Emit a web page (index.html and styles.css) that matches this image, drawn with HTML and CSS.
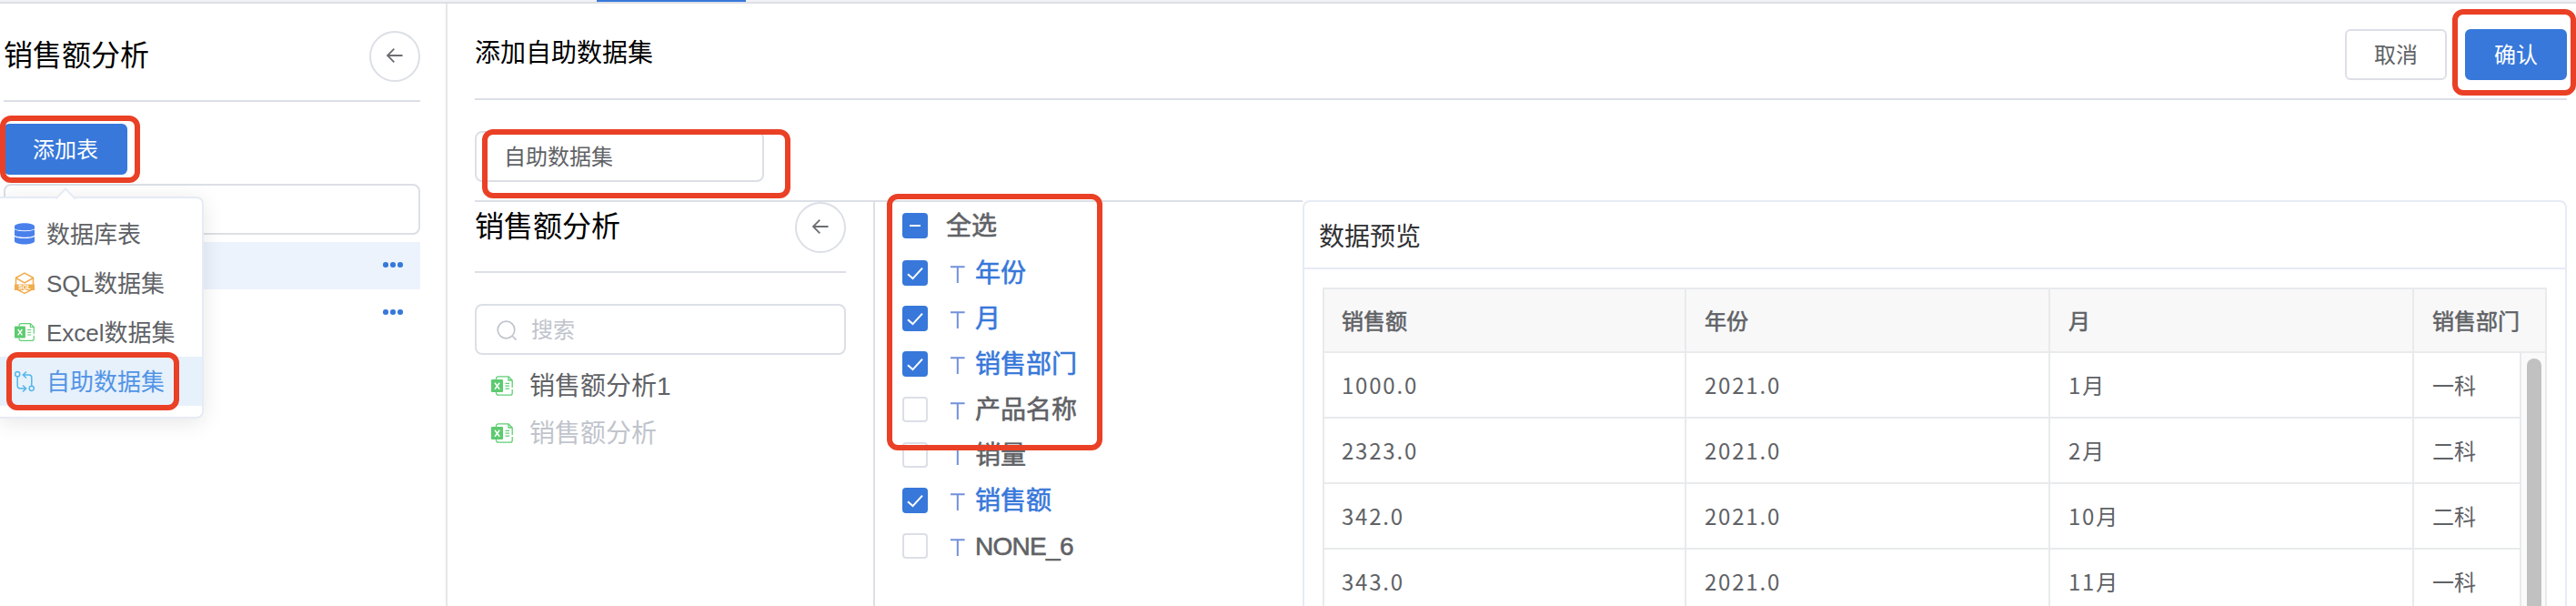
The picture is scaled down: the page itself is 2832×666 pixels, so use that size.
FILE: index.html
```html
<!DOCTYPE html>
<html lang="zh-CN">
<head>
<meta charset="utf-8">
<title>添加自助数据集</title>
<link rel="stylesheet" href="styles.css">
</head>
<body>
<svg class="defs" width="0" height="0">
  <symbol id="i-back" viewBox="0 0 20 18"><path d="M18.500 9H1.800M9.300 1.700L2 9l7.300 7.300" fill="none" stroke="currentColor" stroke-width="1.800"/></symbol>
  <symbol id="i-excel" viewBox="0 0 24 22"><path d="M5.500 4V3a2.200 2.200 0 0 1 2.200-2.200H19l4.200 4.200V13M23.200 15v4a2.200 2.200 0 0 1-2.200 2.200H7.700a2.200 2.200 0 0 1-2.200-2.200V18M19 1v4h4" fill="none" stroke="#5fcf74" stroke-width="1.300"/><rect x="0" y="4" width="13" height="14" rx="1" fill="#5ccb6f"/><path d="M4 7.700l5.200 7M9.200 7.700l-5.200 7" stroke="#fff" stroke-width="1.500"/><path d="M15.500 8.300h4.500M15.500 11.200h4.500M15.500 14.200h4.500" stroke="#5fcf74" stroke-width="1.200"/></symbol>
  <symbol id="i-t" viewBox="0 0 16 19"><path d="M0 1.200h15.600M7.800 1.200V19" fill="none" stroke="#7191da" stroke-width="2"/></symbol>
  <symbol id="i-check" viewBox="0 0 28 28"><path d="M6 15.200l5.500 4.900L22 8.600" fill="none" stroke="#fff" stroke-width="2"/></symbol>
</svg>
<div class="topbar"><div class="tab"></div></div>
<div class="app">
  <aside class="sidebar">
    <div class="group-head"><h2>销售额分析</h2><span class="circle"><svg><use href="#i-back"/></svg></span></div>
    <div class="add-row"><button class="btn primary add">添加表</button><i class="mark m-add"></i></div>
    <div class="input side-input">
      <div class="menu">
        <svg class="menu-arrow" viewBox="0 0 22 13"><path d="M0 13L11 1.500 22 13" fill="#fff" stroke="#e6ebf5" stroke-width="2"/></svg>
        <div class="menu-item"><svg viewBox="0 0 22 24"><path d="M0 4c0-5 22-5 22 0v2c0 3-22 3-22 0zM0 7.300c4 2.500 18 2.500 22 0v6.200c-2 3-20 3-22 0zM0 15c4 2.700 18 2.700 22 0v5c0 4.600-22 4.600-22 0z" fill="#4a80ec"/></svg>数据库表</div>
        <div class="menu-item"><svg viewBox="0 0 22 24"><path d="M1.500 14V6.300L11 1l9.500 5.300V14M1.500 6.500L11 12l9.500-5.500M3.500 19.500L11 23.300l7.500-3.800" fill="none" stroke="#f0ad4e" stroke-width="1.500"/><path d="M0 13.500h22v6.500H0z" fill="#f0ad4e"/><text x="11" y="19.300" text-anchor="middle" class="sql">SQL</text></svg>SQL数据集</div>
        <div class="menu-item"><svg><use href="#i-excel"/></svg>Excel数据集</div>
        <div class="menu-item active"><svg viewBox="0 0 22 24" fill="none" stroke="#54b5ea" stroke-width="1.500"><circle cx="3.200" cy="4.200" r="2.600"/><circle cx="18.800" cy="19.800" r="2.600"/><path d="M3.200 6.800V17a3 3 0 0 0 3 3h6.300M9 16.500l3.700 3.500L9 23.500M18.800 17.200V8a3 3 0 0 0-3-3H9.500M13 1.500L9.300 5 13 8.500"/></svg>自助数据集</div>
        <i class="mark m-menu"></i>
      </div>
    </div>
    <div class="side-list">
      <div class="side-row selected"><i></i><i></i><i></i></div>
      <div class="side-row"><i></i><i></i><i></i></div>
    </div>
  </aside>
  <main class="main">
    <header class="page-head">
      <h1>添加自助数据集</h1>
      <div class="actions"><button class="btn">取消</button><div class="confirm"><button class="btn primary">确认</button><i class="mark m-ok"></i></div></div>
    </header>
    <div class="name-row"><div class="input name">自助数据集</div><i class="mark m-name"></i></div>
    <div class="columns">
      <section class="source">
        <div class="group-head"><h2>销售额分析</h2><span class="circle"><svg><use href="#i-back"/></svg></span></div>
        <div class="input search"><svg viewBox="0 0 22 22"><path d="M17.500 17.500l4 4" stroke="#c0c4cc" stroke-width="1.700"/><circle cx="10.500" cy="10.500" r="9.300" fill="none" stroke="#c0c4cc" stroke-width="1.700"/></svg>搜索</div>
        <div class="tree">
          <div class="tree-row"><svg><use href="#i-excel"/></svg>销售额分析1</div>
          <div class="tree-row disabled"><svg><use href="#i-excel"/></svg>销售额分析</div>
        </div>
      </section>
      <section class="fields">
        <div class="field all"><span class="box on"><b></b></span>全选</div>
        <div class="field on"><span class="box on"><svg><use href="#i-check"/></svg></span><svg class="t"><use href="#i-t"/></svg>年份</div>
        <div class="field on"><span class="box on"><svg><use href="#i-check"/></svg></span><svg class="t"><use href="#i-t"/></svg>月</div>
        <div class="field on"><span class="box on"><svg><use href="#i-check"/></svg></span><svg class="t"><use href="#i-t"/></svg>销售部门</div>
        <div class="field"><span class="box"></span><svg class="t"><use href="#i-t"/></svg>产品名称</div>
        <div class="field"><span class="box"></span><svg class="t"><use href="#i-t"/></svg>销量</div>
        <div class="field on"><span class="box on"><svg><use href="#i-check"/></svg></span><svg class="t"><use href="#i-t"/></svg>销售额</div>
        <div class="field latin"><span class="box"></span><svg class="t"><use href="#i-t"/></svg>NONE_6</div>
        <i class="mark m-fields"></i>
      </section>
      <section class="preview">
        <div class="preview-head">数据预览</div>
        <div class="grid">
          <div class="row head"><span>销售额</span><span>年份</span><span>月</span><span>销售部门</span></div>
          <div class="body">
            <div class="rows">
              <div class="row"><span><em>1000.0</em></span><span><em>2021.0</em></span><span><em>1</em>月</span><span>一科</span></div>
              <div class="row"><span><em>2323.0</em></span><span><em>2021.0</em></span><span><em>2</em>月</span><span>二科</span></div>
              <div class="row"><span><em>342.0</em></span><span><em>2021.0</em></span><span><em>10</em>月</span><span>二科</span></div>
              <div class="row"><span><em>343.0</em></span><span><em>2021.0</em></span><span><em>11</em>月</span><span>一科</span></div>
            </div>
            <div class="scroll"><div class="thumb"></div></div>
          </div>
        </div>
      </section>
    </div>
  </main>
</div>
</body>
</html>
```
FILE: styles.css
```css
* { box-sizing: border-box; margin: 0; padding: 0; }
html, body { height: 100%; overflow: hidden; }
body {
  display: flex;
  flex-direction: column;
  background: #fff;
  color: #606266;
  font: 24px/1 "Liberation Sans", "Noto Sans CJK SC", sans-serif;
  white-space: nowrap;
}
i, em { font-style: normal; }
h1, h2 { color: #000; font-weight: 400; }
h1 { font-size: 28px; }
h2 { font-size: 32px; }
.defs { position: absolute; }
.topbar { flex: none; height: 4px; background: #f0f2f7; border-bottom: 2px solid #dcdfe6; padding-left: 656px; }
.tab { width: 164px; height: 2px; background: #3778da; }
.app { flex: 1; min-height: 0; display: flex; }

.sidebar { flex: none; width: 492px; border-right: 2px solid #e6e6e6; padding: 30px 28px 0 4px; }
.group-head { display: flex; justify-content: space-between; height: 78px; border-bottom: 2px solid #dcdfe6; line-height: 55px; }
.circle { width: 56px; height: 56px; border: 2px solid #dcdfe6; border-radius: 50%; display: flex; align-items: center; justify-content: center; color: #6b6d71; }
.circle svg { width: 20px; height: 18px; margin-bottom: 2px; }
.add-row { position: relative; margin: 24px 0 10px; height: 56px; }
.btn {
  height: 56px; width: 112px; padding-top: 1px;
  font: inherit; color: #606266;
  background: #fff; border: 2px solid #dcdfe6; border-radius: 6px;
}
.btn.primary { background: #3778da; border-color: #3778da; color: #fff; }
.btn.add { width: 136px; }
.input { height: 56px; border: 2px solid #dcdfe6; border-radius: 8px; background: #fff; display: flex; align-items: center; }
.side-input { position: relative; }

.mark { position: absolute; border: 6px solid #ea4025; border-radius: 12px; z-index: 5; pointer-events: none; }
.m-add { left: -4px; top: -9px; width: 154px; height: 74px; }
.m-menu { left: 7px; top: 169px; width: 190px; height: 64px; }
.m-ok { left: -14px; top: -22px; width: 136px; height: 95px; }
.m-name { left: 8px; top: -2px; width: 339px; height: 76px; }
.m-fields { left: 13px; top: -9px; width: 237px; height: 282px; }

.menu {
  position: absolute; left: -6px; top: 12px; width: 224px; height: 244px; z-index: 4;
  padding: 12px 0; background: #fff; border: 2px solid #e6ebf5; border-left: 0; border-radius: 0 8px 8px 0;
  box-shadow: 0 4px 24px rgba(0, 0, 0, .1);
}
.menu-arrow { position: absolute; left: 61px; top: -12px; width: 22px; height: 13px; }
.menu-item { display: flex; align-items: center; gap: 13px; height: 54px; padding: 2px 0 0 16px; font-size: 26px; }
.menu-item svg { width: 22px; height: 24px; margin-bottom: 2px; }
.menu-item.active { background: #e7f1fb; color: #5294e6; }
.sql { font: bold 6.500px "Liberation Sans", sans-serif; fill: #fff; }

.side-list { margin-top: 8px; }
.side-row { display: flex; justify-content: flex-end; align-items: center; gap: 2.400px; height: 52px; padding: 0 19px 2px 0; }
.side-row.selected { background: #ecf3fd; }
.side-row i { width: 5.600px; height: 5.600px; border-radius: 50%; background: #3778da; }

.main { flex: 1; min-width: 0; display: flex; flex-direction: column; padding: 0 10px 0 30px; }
.page-head { flex: none; display: flex; justify-content: space-between; height: 106px; padding-top: 28px; border-bottom: 2px solid #dcdfe6; }
.page-head h1 { line-height: 54px; }
.actions { display: flex; gap: 20px; }
.confirm { position: relative; }
.name-row { position: relative; flex: none; margin: 34px 0 20px; height: 56px; }
.name { width: 318px; padding: 1px 0 0 30px; }
.columns { flex: 1; min-height: 0; display: grid; grid-template-columns: 440px 470px 1fr; }
.source { border-top: 2px solid #dcdfe6; border-right: 2px solid #dcdfe6; padding-right: 30px; }
.search { margin-top: 34px; padding: 1px 0 0 22px; gap: 16px; color: #c0c4cc; }
.search svg { width: 22px; height: 22px; }
.tree { padding-top: 9px; }
.tree-row { display: flex; align-items: center; gap: 18px; height: 52px; padding-left: 18px; font-size: 28px; }
.tree-row svg { width: 24px; height: 22px; margin-bottom: 2px; }
.tree-row.disabled { color: #c0c4cc; }

.fields { position: relative; border-top: 2px solid #dcdfe6; padding: 12px 0 0 30px; }
.field { display: flex; align-items: center; height: 30px; margin-bottom: 20px; font-size: 28px; -webkit-text-stroke: .6px currentColor; }
.field.all { margin-bottom: 22px; gap: 20px; }
.field.on { color: #3778da; }
.field.latin { letter-spacing: -.7px; }
.box { width: 28px; height: 28px; margin-bottom: 2px; border: 2px solid #dcdfe6; border-radius: 4px; }
.box.on { background: #3778da; border: 0; display: flex; align-items: center; justify-content: center; }
.box svg { width: 28px; height: 28px; }
.box b { width: 12px; height: 2px; background: #fff; }
.t { width: 16px; height: 19px; margin: 1px 11px 0 25px; }

.preview { border: 2px solid #e6ebf5; border-bottom: 0; border-radius: 8px 8px 0 0; display: flex; flex-direction: column; min-height: 0; overflow: hidden; }
.preview-head { flex: none; height: 74px; padding-left: 16px; border-bottom: 2px solid #e6ebf5; font-size: 28px; line-height: 78px; color: #303133; }
.grid { flex: 1; min-height: 0; margin: 20px 20px 0; border: 2px solid #e8eaec; border-bottom: 0; font-family: "Noto Sans CJK SC", sans-serif; }
.row { display: grid; grid-template-columns: 398px 400px 400px 1fr; height: 72px; border-bottom: 2px solid #e8eaec; line-height: 70px; }
.row span { padding-left: 20px; border-right: 2px solid #e8eaec; }
.row span:first-child { padding-left: 19px; }
.row em { letter-spacing: 1.800px; }
.row.head { height: 70px; line-height: 68px; background: #f8f8f9; -webkit-text-stroke: .6px currentColor; }
.row.head span:last-child { border-right: 0; }
.body { display: flex; }
.rows { flex: 1; }
.scroll { width: 26px; height: 280px; padding: 6px; background: #fafafa; }
.thumb { width: 16px; height: 400px; border-radius: 8px; background: #c1c1c1; }
```
